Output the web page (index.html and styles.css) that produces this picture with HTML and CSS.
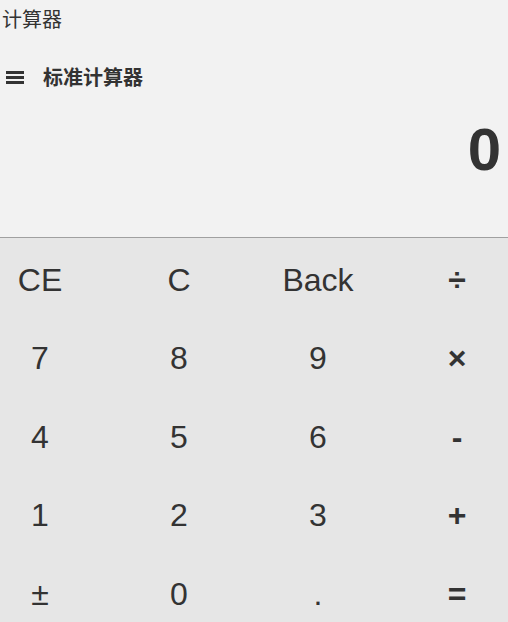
FILE: index.html
```html
<!DOCTYPE html>
<html lang="zh-CN">
<head>
    <meta charset="UTF-8">
    <meta name="viewport" content="width=device-width, initial-scale=1.0">
    <title>计算器</title>
    <link rel="stylesheet" href="styles.css">
</head>
<body>

    <!-- Window title -->
    <div class="title">计算器</div>

    <!-- Mode header -->
    <div class="header">
        <svg class="menu-icon" width="18" height="13" viewBox="0 0 18 13">
            <rect x="0" y="0" width="18" height="3" fill="#333"/>
            <rect x="0" y="5" width="18" height="3" fill="#333"/>
            <rect x="0" y="10" width="18" height="3" fill="#333"/>
        </svg>
        <span class="mode">标准计算器</span>
    </div>

    <!-- Display -->
    <div class="display">0</div>

    <!-- Keypad -->
    <div class="keypad">
        <button class="key">CE</button>
        <button class="key">C</button>
        <button class="key">Back</button>
        <button class="key op">÷</button>

        <button class="key">7</button>
        <button class="key">8</button>
        <button class="key">9</button>
        <button class="key op">×</button>

        <button class="key">4</button>
        <button class="key">5</button>
        <button class="key">6</button>
        <button class="key op">-</button>

        <button class="key">1</button>
        <button class="key">2</button>
        <button class="key">3</button>
        <button class="key op">+</button>

        <button class="key">±</button>
        <button class="key">0</button>
        <button class="key">.</button>
        <button class="key op">=</button>
    </div>

</body>
</html>
```

FILE: styles.css
```css
html, body {
    height: 100%;
}

body {
    font-family: 'Liberation Sans', 'Noto Sans CJK SC', sans-serif;
    background-color: #f2f2f2;
    color: #333;
    margin: 0;
    padding: 0;
    overflow: hidden;
}

/* Title */
.title {
    font-family: 'Noto Sans CJK SC', sans-serif;
    font-size: 20px;
    line-height: 28px;
    padding: 5px 2px;
}

/* Header */
.header {
    display: flex;
    align-items: center;
    height: 40px;
    margin-top: 18px;
    padding-left: 6px;
}

.menu-icon {
    display: block;
    margin-right: 19px;
    margin-top: 2px;
}

.mode {
    font-family: 'Noto Sans CJK SC', sans-serif;
    font-size: 20px;
    font-weight: bold;
}

/* Display */
.display {
    text-align: right;
    font-size: 60px;
    font-weight: bold;
    line-height: 60px;
    padding: 24px 7px 57px 0;
}

/* Keypad */
.keypad {
    border-top: 1px solid #a0a0a0;
    background-color: #e6e6e6;
    display: grid;
    grid-template-columns: repeat(4, 80px);
    grid-auto-rows: 78.5px;
    column-gap: 59px;
    padding-top: 3px;
    height: 100%;
}

.key {
    font-family: 'Liberation Sans', sans-serif;
    font-size: 32px;
    color: #333;
    background: none;
    border: none;
    padding: 0;
    cursor: pointer;
}

.key.op {
    font-weight: bold;
}

.key:hover {
    background-color: #d6d6d6;
}
```
